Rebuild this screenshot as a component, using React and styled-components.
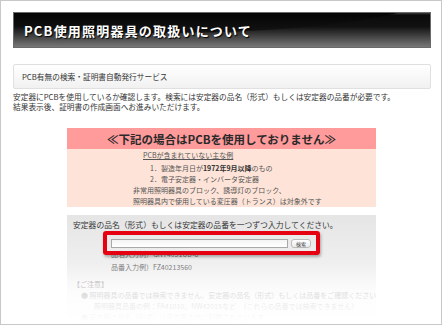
import React from "react";
import styled, { createGlobalStyle } from "styled-components";

const GlobalStyle = createGlobalStyle`
  body {
    margin: 0;
    background: #fff;
    font-family: "Noto Sans CJK JP", "Liberation Sans", sans-serif;
    color: #333;
  }
`;

const Frame = styled.div`
  width: 442px;
  height: 325px;
  box-sizing: border-box;
  border: 1px solid #c8c8c8;
  padding: 11px 10px 0 12px;
  overflow: hidden;
  background: #fff;
`;

const TitleBar = styled.h1`
  position: relative;
  overflow: hidden;
  margin: 0;
  height: 36px;
  box-sizing: border-box;
  border: 1px solid #6a6a6a;
  background: linear-gradient(#3a3a3a 0, #0a0a0a 6%, #111 40%, #3c3c3c 65%, #787878 100%);
  display: flex;
  align-items: center;
  padding-left: 10px;
  font-size: 13px;
  font-weight: bold;
  letter-spacing: 1.2px;
  color: #fff;
  text-shadow: 1px 1px 1px #000;

  &::before {
    content: "";
    position: absolute;
    left: -30%;
    top: -64px;
    width: 132%;
    height: 84px;
    border-radius: 50%;
    background: linear-gradient(#000 70%, #141414 100%);
  }

  span {
    position: relative;
  }
`;

const SubBar = styled.div`
  margin-top: 16px;
  height: 25px;
  box-sizing: border-box;
  border: 1px solid #e0e0e0;
  border-radius: 2px;
  background: linear-gradient(#fff, #f1f1f1);
  display: flex;
  align-items: center;
  padding: 0 0 1px 8px;
  font-size: 7.7px;
  color: #333;
`;

const Lead = styled.p`
  margin: 3px 0 0;
  font-size: 7.7px;
  line-height: 10px;
  color: #333;
`;

const NoticeBox = styled.div`
  margin: 16px 0 0 54px;
  width: 309px;
  background: #fee4d8;
`;

const NoticeHead = styled.div`
  height: 21px;
  background: #ff9b9b;
  display: flex;
  align-items: center;
  justify-content: center;
  font-size: 11.5px;
  font-weight: bold;
  color: #2a2a2a;
`;

const NoticeBody = styled.div`
  padding: 1px 0 0;
  font-size: 7px;
  line-height: 11px;
  color: #555;
`;

const NoticeLine = styled.div`
  padding-left: ${(p) => p.$indent}px;
  white-space: nowrap;
  ${(p) => p.$underline && "text-decoration: underline; margin-bottom: 2px;"}

  b {
    color: #333;
  }
`;

const SearchPanel = styled.div`
  position: relative;
  margin: 8px 0 0 54px;
  width: 309px;
  height: 110px;
  background: linear-gradient(#e5e5e5, #f3f3f3 60%, #fafafa);
  padding: 4px 0 0 6px;
  box-sizing: border-box;
`;

const PanelLead = styled.div`
  font-size: 7.8px;
  line-height: 12px;
  color: #333;
`;

const InputRow = styled.div`
  display: flex;
  align-items: center;
  gap: 3px;
  margin: 8px 0 0 38px;
`;

const TextInput = styled.div`
  width: 177px;
  height: 9px;
  box-sizing: border-box;
  border: 1px solid #a9a9a9;
  background: linear-gradient(#f4f4f4, #fff);
`;

const SearchButton = styled.div`
  width: 20px;
  height: 9px;
  box-sizing: border-box;
  border: 1px solid #bcbcbc;
  border-radius: 3px;
  background: linear-gradient(#fff, #ececec);
  font-size: 5px;
  line-height: 7px;
  text-align: center;
  color: #444;
`;

const Example = styled.div`
  margin-left: 38px;
  font-size: 7px;
  line-height: 12.5px;
  color: #777;
  &:first-of-type {
    margin-top: 1px;
  }
`;

const Caution = styled.div`
  margin-top: 6px;
  font-size: 7px;
  line-height: 11px;
  color: #888;
`;

const CautionLine = styled.div`
  padding-left: ${(p) => p.$indent}px;
  white-space: nowrap;
`;

const Fade = styled.div`
  position: absolute;
  left: 0;
  right: 0;
  top: 50px;
  bottom: 0;
  background: linear-gradient(rgba(255, 255, 255, 0), rgba(255, 255, 255, 0.7) 45%, #fff 95%);
  pointer-events: none;
`;

const Highlight = styled.div`
  position: absolute;
  left: 36px;
  top: 16px;
  width: 217px;
  height: 24px;
  box-sizing: border-box;
  border: 4px solid #e50012;
  border-radius: 3px;
  box-shadow: 1px 2px 3px rgba(0, 0, 0, 0.3);
`;

const App = () => (
  <>
    <GlobalStyle />
    <Frame>
      <TitleBar>
        <span>PCB使用照明器具の取扱いについて</span>
      </TitleBar>
      <SubBar>PCB有無の検索・証明書自動発行サービス</SubBar>
      <Lead>
        安定器にPCBを使用しているか確認します。検索には安定器の品名（形式）もしくは安定器の品番が必要です。
        <br />
        結果表示後、証明書の作成画面へお進みいただけます。
      </Lead>
      <NoticeBox>
        <NoticeHead>≪下記の場合はPCBを使用しておりません≫</NoticeHead>
        <NoticeBody>
          <NoticeLine $indent={76} $underline>
            PCBが含まれていない主な例
          </NoticeLine>
          <NoticeLine $indent={83}>
            1．製造年月日が<b>1972年9月以降</b>のもの
          </NoticeLine>
          <NoticeLine $indent={83}>2．電子安定器・インバータ安定器</NoticeLine>
          <NoticeLine $indent={66}>非常用照明器具のブロック、誘導灯のブロック、</NoticeLine>
          <NoticeLine $indent={66}>照明器具内で使用している変圧器（トランス）は対象外です</NoticeLine>
        </NoticeBody>
      </NoticeBox>
      <SearchPanel>
        <PanelLead>安定器の品名（形式）もしくは安定器の品番を一つずつ入力してください。</PanelLead>
        <InputRow>
          <TextInput />
          <SearchButton>検索</SearchButton>
        </InputRow>
        <Example>品名入力例）GN74031UD-6</Example>
        <Example>品番入力例）FZ40213560</Example>
        <Caution>
          <CautionLine $indent={0}>【ご注意】</CautionLine>
          <CautionLine $indent={8}>● 照明器具の品番では検索できません。安定器の品名（形式）もしくは品番をご確認ください</CautionLine>
          <CautionLine $indent={21}>照明器具品番の例：FA41010、NW42015など　（これらの品番では検索できません）</CautionLine>
          <CautionLine $indent={8}>● 安定器の品名（形式）は安定器本体に記載されています</CautionLine>
        </Caution>
        <Fade />
        <Highlight />
      </SearchPanel>
    </Frame>
  </>
);

export default App;
